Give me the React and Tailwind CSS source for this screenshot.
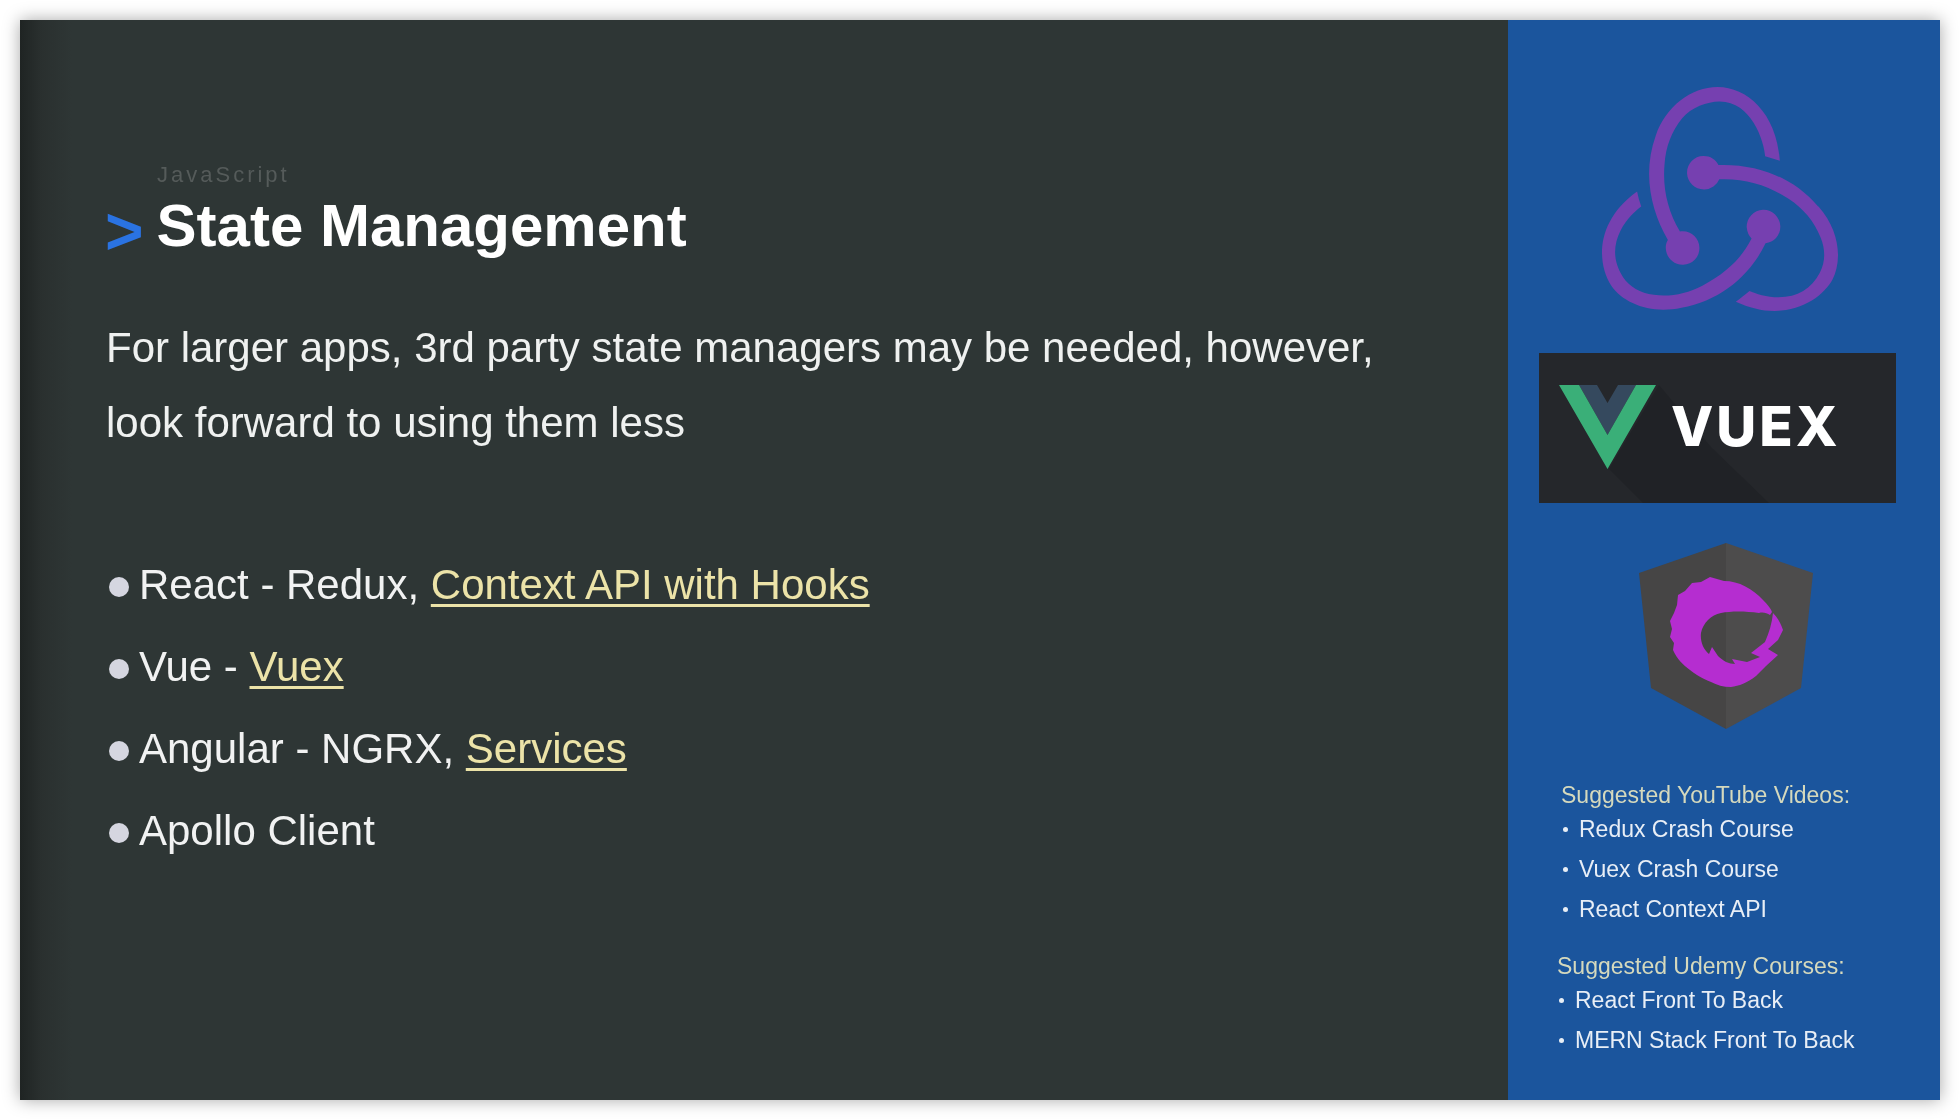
// Slide: State Management with a logo and links sidebar
import { SiRedux } from 'react-icons/si';

const frameworks = [
    { label: 'React - Redux, ', link: 'Context API with Hooks' },
    { label: 'Vue - ', link: 'Vuex' },
    { label: 'Angular - NGRX, ', link: 'Services' },
    { label: 'Apollo Client' },
];

const youtube = ['Redux Crash Course', 'Vuex Crash Course', 'React Context API'];
const udemy = ['React Front To Back', 'MERN Stack Front To Back'];

const VueMark = () => (
    <svg viewBox="0 0 97 84" className="w-[97px] h-[84px] shrink-0 relative">
        <polygon points="20,0 38,0 48.5,18 59,0 77,0 48.5,50" fill="#35495e" />
        <polygon points="0,0 20,0 48.5,50 77,0 97,0 48.5,84" fill="#3aaf78" />
    </svg>
);

const NgrxShield = () => (
    <svg viewBox="0 0 174 186" className="w-[174px] h-[186px]">
        <polygon points="87,0 0,30 12,145 87,186" fill="#464545" />
        <polygon points="87,0 174,30 162,145 87,186" fill="#4d4c4c" />
        {/* crescent, open hole in the middle, feathered on the lower right */}
        <path
            d="M71 34 L85 38 C100 38 114 46 124 57 C129 62 132 66 133 69 L131 72 C128 70 124 69 120 70 C106 68 92 68 82 70 C72 72 64 80 62 90 C61 98 64 106 70 111 L73 104 L79 113 C84 118 90 121 96 121 L93 116 L108 119 L121 114 L112 110 L126 99 C130 90 133 80 134 70 C139 75 142 81 144 87 L139 97 L129 106 L139 112 L127 123 L117 133 C108 140 100 143 92 144 C84 144 78 142 72 139 C62 135 56 131 51 127 C44 122 38 116 34 107 L35 100 L31 94 L33 86 L31 78 L35 70 L38 62 L39 52 L46 48 L53 40 L62 39 Z"
            fill="#b52dd0"
        />
    </svg>
);

const LinkList = ({ title, items, className }) => (
    <div className={className}>
        <p className="text-[23px] leading-[30px] text-[#d5d9bd]">{title}</p>
        <ul className="mt-[4px] flex flex-col gap-[10px]">
            {items.map((item) => (
                <li key={item} className="flex items-center text-[23px] leading-[30px] text-[#e8eef6]">
                    <span className="w-[5px] h-[5px] rounded-full bg-[#e8eef6] ml-[2px] mr-[11px]" />
                    {item}
                </li>
            ))}
        </ul>
    </div>
);

export default function App() {
    return (
        <div className="w-[1960px] h-[1120px] bg-white p-[20px] font-['Liberation_Sans',Arial,sans-serif]">
            <div className="flex h-[1080px] shadow-[0_0_16px_rgba(0,0,0,0.35)] blur-[0.5px]">
                {/* Main column */}
                <main className="w-[1488px] bg-[linear-gradient(to_right,#1f2423_0px,#2a302f_22px,#2e3635_52px)] pl-[85px] pt-[140px]">
                    <div className="pl-[52px] text-[22px] leading-[30px] tracking-[3px] text-[#555b5a]">JavaScript</div>
                    <h1 className="flex items-baseline gap-[13px] mt-[-2px] text-[60px] leading-[70px] font-bold text-white">
                        <span className="text-[66px] leading-[70px] text-[#2a73e2] translate-y-[8px]">&gt;</span>
                        State Management
                    </h1>
                    <p className="mt-[49px] text-[42px] leading-[75px] text-[#eff1f0] w-[1340px] pl-[1px]">
                        For larger apps, 3rd party state managers may be needed, however,
                        <br />
                        look forward to using them less
                    </p>
                    <ul className="mt-[89px] flex flex-col gap-[10px] pl-[4px]">
                        {frameworks.map((row) => (
                            <li key={row.label} className="flex items-center text-[42px] leading-[72px] text-[#f1f2f2]">
                                <span className="w-[20px] h-[20px] rounded-full bg-[#d5d6e0] mr-[10px] mt-[4px]" />
                                <span className="whitespace-pre">
                                    {row.label}
                                    {row.link && <a className="text-[#ece3a8] underline decoration-[3px] underline-offset-[5px]">{row.link}</a>}
                                </span>
                            </li>
                        ))}
                    </ul>
                </main>

                {/* Sidebar */}
                <aside className="flex-1 bg-[#1b559d] flex flex-col">
                    <div className="flex justify-center pt-[61px] pr-[8px]">
                        <SiRedux size={236} color="#7640b0" />
                    </div>
                    <div className="relative overflow-hidden mt-[36px] ml-[31px] w-[357px] h-[150px] bg-[#25272b] flex items-center gap-[15px] pl-[20px] pb-[3px]">
                        {/* long shadow behind the logo */}
                        <svg viewBox="0 0 357 150" className="absolute inset-0 w-[357px] h-[150px]">
                            <polygon points="70,116 104,150 230,150 172,94 120,32" fill="#202226" />
                        </svg>
                        <VueMark />
                        <span className="relative font-['Inter',sans-serif] font-extrabold text-[55px] tracking-[3px] text-white">VUEX</span>
                    </div>
                    <div className="flex justify-center mt-[40px] pl-[3px]">
                        <NgrxShield />
                    </div>
                    <LinkList title="Suggested YouTube Videos:" items={youtube} className="mt-[51px] pl-[53px]" />
                    <LinkList title="Suggested Udemy Courses:" items={udemy} className="mt-[27px] pl-[49px]" />
                </aside>
            </div>
        </div>
    );
}
